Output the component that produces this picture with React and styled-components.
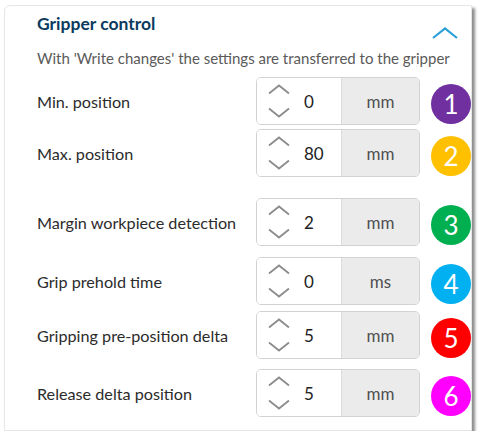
import styled, { createGlobalStyle } from 'styled-components';

const rows = [
  { label: 'Min. position', value: '0', unit: 'mm', badge: '1', color: '#7030a0', gap: 0 },
  { label: 'Max. position', value: '80', unit: 'mm', badge: '2', color: '#ffc000', gap: 4 },
  { label: 'Margin workpiece detection', value: '2', unit: 'mm', badge: '3', color: '#00b050', gap: 21 },
  { label: 'Grip prehold time', value: '0', unit: 'ms', badge: '4', color: '#00b0f0', gap: 11 },
  { label: 'Gripping pre-position delta', value: '5', unit: 'mm', badge: '5', color: '#ff0000', gap: 6 },
  { label: 'Release delta position', value: '5', unit: 'mm', badge: '6', color: '#ff00ff', gap: 10 }
];

const Chevron = ({ down }) => (
  <svg width="22" height="11" viewBox="0 0 22 11">
    <path
      d={down ? 'M1 1.5 L11 9.5 L21 1.5' : 'M1 9.5 L11 1.5 L21 9.5'}
      fill="none"
      stroke="#8c8c8c"
      strokeWidth="1.8"
    />
  </svg>
);

export default () => (
  <>
    <GlobalStyle />
    <Card>
      <Header>
        <Title>Gripper control</Title>
        <Collapse>
          <svg width="26" height="12" viewBox="0 0 26 12">
            <path d="M1 11 L13 1.5 L25 11" fill="none" stroke="#2a9fd8" strokeWidth="2.2" />
          </svg>
        </Collapse>
      </Header>
      <Hint>With 'Write changes' the settings are transferred to the gripper</Hint>
      <List>
        {rows.map(r => (
          <Row key={r.badge} $gap={r.gap}>
            <Label>{r.label}</Label>
            <Field>
              <Spinner>
                <Arrows>
                  <Chevron />
                  <Chevron down />
                </Arrows>
                <Value>{r.value}</Value>
              </Spinner>
              <Unit>{r.unit}</Unit>
            </Field>
            <Badge $color={r.color}>{r.badge}</Badge>
          </Row>
        ))}
      </List>
    </Card>
  </>
);

const GlobalStyle = createGlobalStyle`
  body {
    margin: 0;
    background: #fff;
    font-family: Lato, "Open Sans", sans-serif;
  }
`;

const Card = styled.div`
  margin: 5px 0 0 4px;
  width: 468px;
  height: 426px;
  box-sizing: border-box;
  background: #fff;
  border: 1px solid #e6e6e6;
  border-radius: 6px 0 0 0;
  box-shadow: 3px 3px 3px rgba(0, 0, 0, 0.45);
  padding: 6px 0 0 32px;
`;

const Header = styled.div`
  display: flex;
  align-items: flex-start;
  justify-content: space-between;
`;

const Title = styled.h2`
  margin: 0;
  font-size: 17.5px;
  font-weight: 700;
  line-height: 24px;
  color: #0b3a5e;
`;

const Collapse = styled.button`
  border: 0;
  background: none;
  padding: 0;
  margin: 15px 13px 0 0;
  display: flex;
`;

const Hint = styled.p`
  margin: 10px 0 0;
  font-size: 15px;
  line-height: 18px;
  color: #5a5a5a;
`;

const List = styled.div`
  display: flex;
  flex-direction: column;
  margin-top: 10px;
`;

const Row = styled.div`
  display: grid;
  grid-template-columns: 1fr 164px 40px;
  column-gap: 11px;
  align-items: center;
  height: 48px;
  margin-top: ${p => p.$gap}px;
`;

const Label = styled.span`
  font-size: 16.2px;
  color: #2b2b2b;
`;

const Field = styled.div`
  display: flex;
  height: 48px;
  box-sizing: border-box;
  border: 1px solid #d2d2d2;
  border-radius: 5px;
  overflow: hidden;
`;

const Spinner = styled.div`
  width: 84px;
  display: flex;
  align-items: center;
  background: #fff;
  padding-left: 11px;
  box-sizing: border-box;
`;

const Arrows = styled.div`
  display: flex;
  flex-direction: column;
  gap: 12px;
`;

const Value = styled.span`
  margin-left: 14px;
  font-size: 17px;
  color: #222;
`;

const Unit = styled.div`
  flex: 1;
  display: flex;
  align-items: center;
  justify-content: center;
  background: #ebebec;
  border-left: 1px solid #dcdcdc;
  font-size: 17px;
  color: #505050;
`;

const Badge = styled.div`
  width: 40px;
  height: 40px;
  margin-top: 5px;
  border-radius: 50%;
  background: ${p => p.$color};
  color: #fff;
  display: flex;
  align-items: center;
  justify-content: center;
  font-size: 26px;
`;
